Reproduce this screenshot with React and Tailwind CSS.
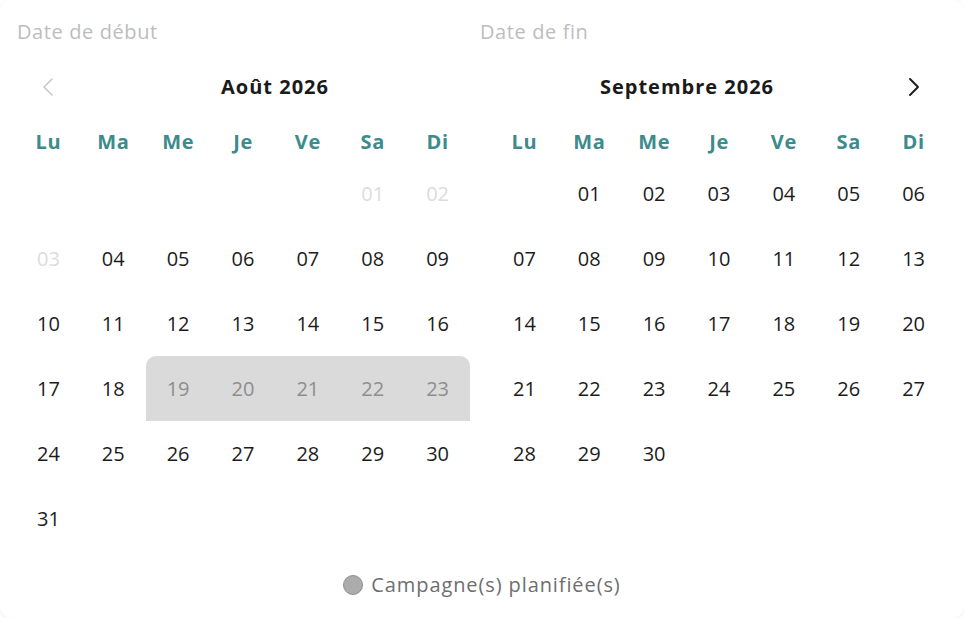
import React from 'react';

const weekdays = ['Lu', 'Ma', 'Me', 'Je', 'Ve', 'Sa', 'Di'];

// each cell: [label, state]  state: 'off' | 'on' | 'busy' | null (empty)
const august = [
    [null, null, null, null, null, ['01', 'off'], ['02', 'off']],
    [['03', 'off'], ['04', 'on'], ['05', 'on'], ['06', 'on'], ['07', 'on'], ['08', 'on'], ['09', 'on']],
    [['10', 'on'], ['11', 'on'], ['12', 'on'], ['13', 'on'], ['14', 'on'], ['15', 'on'], ['16', 'on']],
    [['17', 'on'], ['18', 'on'], ['19', 'busy'], ['20', 'busy'], ['21', 'busy'], ['22', 'busy'], ['23', 'busy']],
    [['24', 'on'], ['25', 'on'], ['26', 'on'], ['27', 'on'], ['28', 'on'], ['29', 'on'], ['30', 'on']],
    [['31', 'on'], null, null, null, null, null, null],
];

const september = [
    [null, ['01', 'on'], ['02', 'on'], ['03', 'on'], ['04', 'on'], ['05', 'on'], ['06', 'on']],
    [['07', 'on'], ['08', 'on'], ['09', 'on'], ['10', 'on'], ['11', 'on'], ['12', 'on'], ['13', 'on']],
    [['14', 'on'], ['15', 'on'], ['16', 'on'], ['17', 'on'], ['18', 'on'], ['19', 'on'], ['20', 'on']],
    [['21', 'on'], ['22', 'on'], ['23', 'on'], ['24', 'on'], ['25', 'on'], ['26', 'on'], ['27', 'on']],
    [['28', 'on'], ['29', 'on'], ['30', 'on'], null, null, null, null],
    [null, null, null, null, null, null, null],
];

const Chevron = ({ dir, className }) => (
    <svg width="16" height="20" viewBox="0 0 16 20" fill="none" className={className}>
        {dir === 'left' ? (
            <path d="M12 2 L4 10 L12 18" stroke="currentColor" strokeWidth="1.6" strokeLinecap="round" strokeLinejoin="round" />
        ) : (
            <path d="M4 2 L12 10 L4 18" stroke="currentColor" strokeWidth="1.9" strokeLinecap="round" strokeLinejoin="round" />
        )}
    </svg>
);

const Day = ({ cell, first, last }) => {
    if (!cell) return <div className="h-[65px]" />;
    const [label, state] = cell;
    if (state === 'busy') {
        return (
            <div
                className={`h-[65px] flex items-center justify-center bg-[#dadada] text-[#8e8e8e] ${first ? 'rounded-tl-[10px]' : ''} ${last ? 'rounded-tr-[10px]' : ''}`}
            >
                {label}
            </div>
        );
    }
    return (
        <div className={`h-[65px] flex items-center justify-center ${state === 'off' ? 'text-[#dcdcdc]' : 'text-[#1c1c1c]'}`}>
            {label}
        </div>
    );
};

const Month = ({ title, rows, side }) => (
    <div className="w-[454px]">
        <div className="h-[46px] flex items-center">
            {side === 'left' && (
                <button className="w-[64px] h-full flex items-center justify-center text-[#c8c8c8]">
                    <Chevron dir="left" />
                </button>
            )}
            <div className="flex-1 text-center text-[20px] font-bold tracking-[0.05em] text-[#1a1a1a]">{title}</div>
            {side === 'right' && (
                <button className="w-[64px] h-full flex items-center justify-center text-[#1a1a1a]">
                    <Chevron dir="right" />
                </button>
            )}
        </div>
        <div className="grid grid-cols-7 h-[51px] pt-3">
            {weekdays.map((d) => (
                <div key={d} className="flex items-center justify-center font-bold tracking-[0.03em] text-[#3d8b8b] text-[20px]">
                    {d}
                </div>
            ))}
        </div>
        <div className="grid grid-cols-7 text-[20px]">
            {rows.map((row, ri) =>
                row.map((cell, ci) => {
                    const busy = cell && cell[1] === 'busy';
                    const prevBusy = ci > 0 && row[ci - 1] && row[ci - 1][1] === 'busy';
                    const nextBusy = ci < 6 && row[ci + 1] && row[ci + 1][1] === 'busy';
                    return <Day key={`${ri}-${ci}`} cell={cell} first={busy && !prevBusy} last={busy && !nextBusy} />;
                })
            )}
        </div>
    </div>
);

const App = () => {
    return (
        <div className="min-h-screen bg-white" style={{ fontFamily: '"Open Sans", sans-serif' }}>
            <div className="w-[964px] h-[618px] bg-white rounded-xl shadow-[0_1px_4px_rgba(0,0,0,0.08)] px-4 flex flex-col">
                <div className="h-16 flex items-center text-[20px] tracking-[0.03em] text-[#bdbdbd]">
                    <div className="w-[464px] pl-px">Date de début</div>
                    <div>Date de fin</div>
                </div>
                <div className="flex gap-[22px]">
                    <Month title="Août 2026" rows={august} side="left" />
                    <Month title="Septembre 2026" rows={september} side="right" />
                </div>
                <div className="flex-1 flex items-center justify-center gap-2 text-[20px] tracking-[0.045em] text-[#6e6e6e]">
                    <span className="w-5 h-5 rounded-full bg-[#acacac] border border-[#8f8f8f]" />
                    <span>Campagne(s) planifiée(s)</span>
                </div>
            </div>
        </div>
    );
};

export default App;
